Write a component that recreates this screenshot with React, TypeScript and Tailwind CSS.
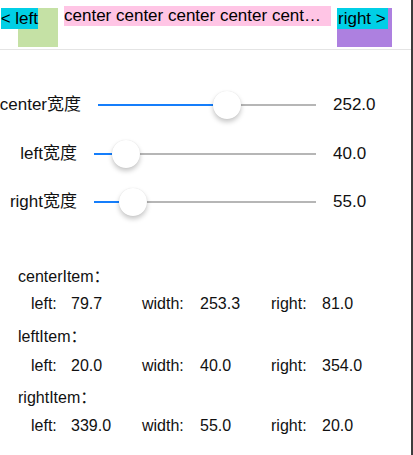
import type { CSSProperties } from 'react';

const fontClass = "font-['Liberation_Sans','Noto_Sans_CJK_SC',sans-serif]";

interface SliderRowProps {
  label: string;
  labelClass: string;
  trackClass: string;
  thumbCenter: number;
  value: string;
  rowClass: string;
}

function SliderRow({ label, labelClass, trackClass, thumbCenter, value, rowClass }: SliderRowProps) {
  const blueStyle: CSSProperties = { width: thumbCenter };
  const thumbStyle: CSSProperties = { left: thumbCenter - 14 };
  return (
    <div className={`flex items-center h-[28px] ${rowClass}`}>
      <div className={`flex justify-end whitespace-nowrap text-[17px] leading-[20px] text-[#111] ${labelClass}`}>
        {label}
      </div>
      <div className={`relative h-[28px] ml-[17px] ${trackClass}`}>
        <div className="absolute left-0 right-0 top-[13px] h-[2px] bg-[#b6b6b6]" />
        <div className="absolute left-0 top-[13px] h-[2px] bg-[#157efb]" style={blueStyle} />
        <div
          className="absolute top-0 w-[28px] h-[28px] rounded-full bg-white shadow-[0_3px_5px_rgba(0,0,0,0.22),0_0_1px_rgba(0,0,0,0.12)]"
          style={thumbStyle}
        />
      </div>
      <div className="ml-[17px] text-[17px] leading-[20px] text-[#111]">{value}</div>
    </div>
  );
}

interface ItemInfo {
  name: string;
  left: string;
  width: string;
  right: string;
}

const ITEMS: ItemInfo[] = [
  { name: 'centerItem', left: '79.7', width: '253.3', right: '81.0' },
  { name: 'leftItem', left: '20.0', width: '40.0', right: '354.0' },
  { name: 'rightItem', left: '339.0', width: '55.0', right: '20.0' },
];

const headerMargins = ['mt-[23px]', 'mt-[13px]', 'mt-[12px]'];
const rowMargins = ['mt-[7px]', 'mt-[9px]', 'mt-[8px]'];

export default function App() {
  return (
    <div className={`flex w-[413px] h-[455px] bg-white overflow-hidden ${fontClass}`}>
      <div className="flex-1 flex flex-col min-w-0">
        {/* nav bar */}
        <div className="flex items-start h-[50px] border-b border-[#e4e4e4]">
          <div className="relative mt-[8px] ml-[18px] w-[40px] h-[39px] bg-[#c5e1a5]">
            <div className="absolute top-0 right-[20px] h-[21px] bg-[#00cfe6] whitespace-nowrap text-[17px] leading-[21px] text-black">
              &lt; left
            </div>
          </div>
          <div className="mt-[6px] ml-[6px] w-[267px] h-[20px] pr-[6px] bg-[#ffc5e5] truncate text-[17px] leading-[20px] text-black">
            center center center center center center center
          </div>
          <div className="relative mt-[8px] ml-[6px] w-[55px] h-[39px] bg-[#ad80e0]">
            <div className="absolute top-0 left-0 w-[51px] h-[21px] pl-[1px] bg-[#00cfe6] whitespace-nowrap text-[17px] leading-[21px] text-black">
              right &gt;
            </div>
          </div>
        </div>

        {/* sliders */}
        <SliderRow
          label="center宽度"
          labelClass="w-[81px]"
          trackClass="w-[218px]"
          thumbCenter={129}
          value="252.0"
          rowClass="mt-[41px]"
        />
        <SliderRow
          label="left宽度"
          labelClass="w-[77px]"
          trackClass="w-[222px]"
          thumbCenter={32}
          value="40.0"
          rowClass="mt-[21px]"
        />
        <SliderRow
          label="right宽度"
          labelClass="w-[77px]"
          trackClass="w-[222px]"
          thumbCenter={39}
          value="55.0"
          rowClass="mt-[20px]"
        />

        {/* frames */}
        <div className="flex flex-col mt-[28px] text-[16px] leading-[20px] text-[#111]">
          {ITEMS.map((it, i) => (
            <div key={it.name} className="flex flex-col">
              <div className={`pl-[18px] ${headerMargins[i]}`}>{it.name}：</div>
              <div className={`flex pl-[31px] ${rowMargins[i]}`}>
                <div className="flex w-[111px]">
                  <span className="w-[40px]">left:</span>
                  <span>{it.left}</span>
                </div>
                <div className="flex w-[129px]">
                  <span className="w-[58px]">width:</span>
                  <span>{it.width}</span>
                </div>
                <div className="flex">
                  <span className="w-[51px]">right:</span>
                  <span>{it.right}</span>
                </div>
              </div>
            </div>
          ))}
        </div>
      </div>
      <div className="w-[1.5px] bg-[#3c3c3c] mr-[0.5px]" />
    </div>
  );
}
